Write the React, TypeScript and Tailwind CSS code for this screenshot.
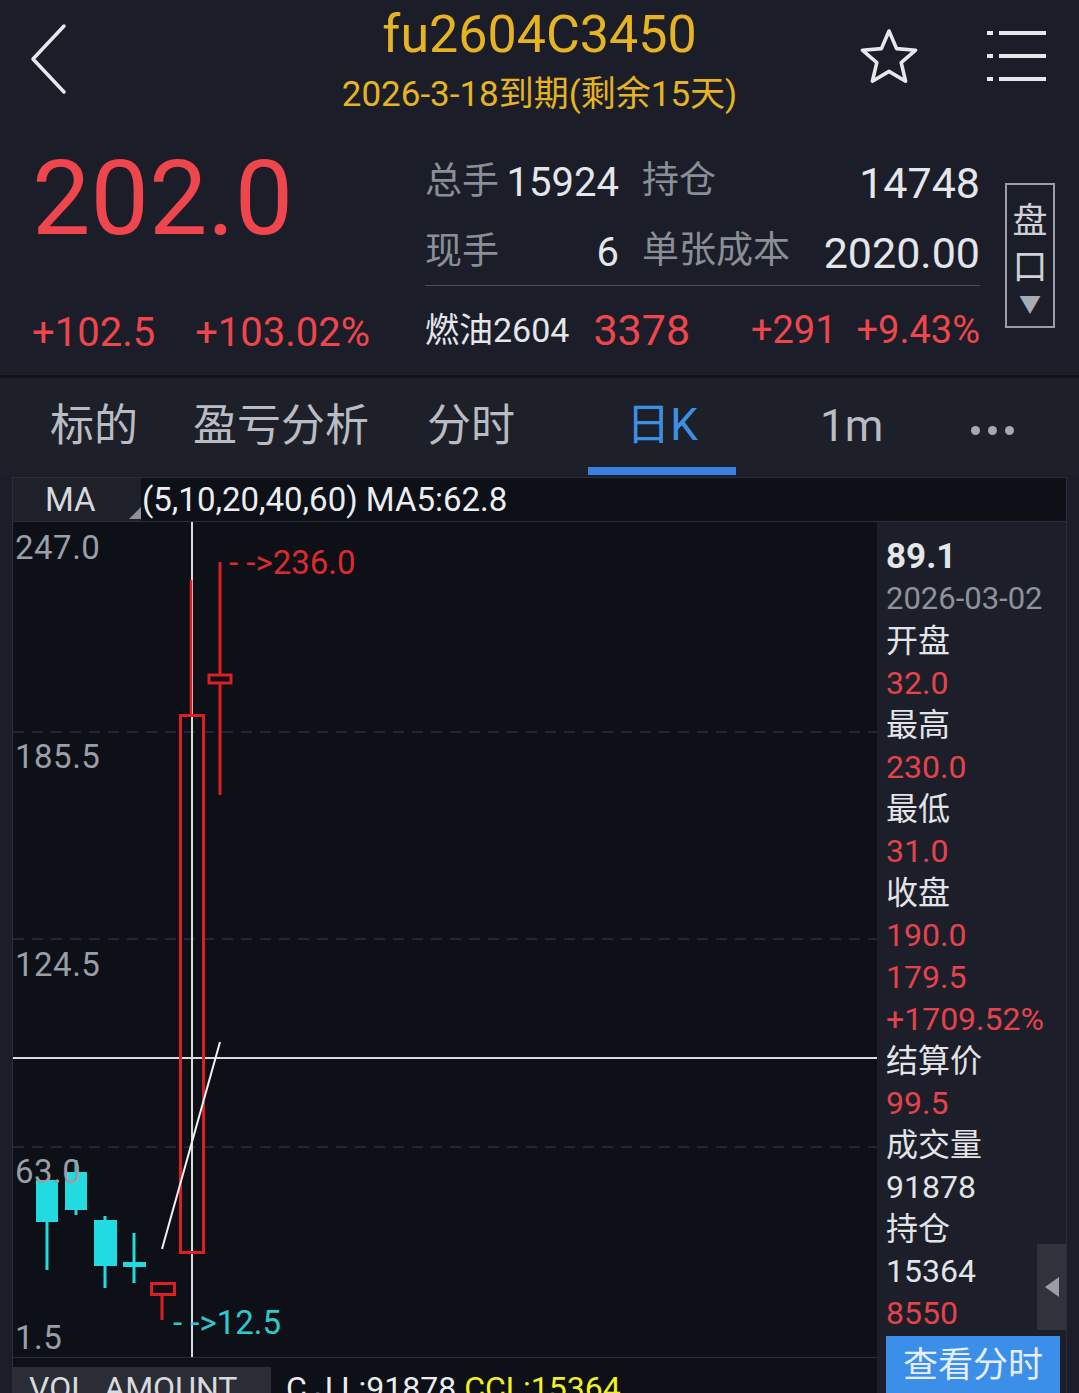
import React from "react";

const RED = "#ef464e";

function BackIcon() {
  return (
    <svg width="40" height="72" viewBox="0 0 40 72" fill="none">
      <path d="M35 3 L4 36 L35 69" stroke="#e8e9ec" strokeWidth="3.5" strokeLinecap="round" strokeLinejoin="round" />
    </svg>
  );
}

function StarIcon() {
  return (
    <svg width="64" height="60" viewBox="0 0 64 60" fill="none">
      <path
        d="M32 4 L39.6 21.6 L58.6 23.2 L44.2 35.6 L48.6 54.2 L32 44.4 L15.4 54.2 L19.8 35.6 L5.4 23.2 L24.4 21.6 Z"
        stroke="#e6e7ea"
        strokeWidth="3.6"
        strokeLinejoin="round"
      />
    </svg>
  );
}

function MenuIcon() {
  return (
    <svg width="60" height="54" viewBox="0 0 60 54" fill="none">
      {[3, 26, 49].map((y) => (
        <g key={y}>
          <rect x="0" y={y - 2} width="6" height="4" fill="#e6e7ea" />
          <rect x="12" y={y - 2} width="47" height="4" fill="#e6e7ea" />
        </g>
      ))}
    </svg>
  );
}

function Chart() {
  const cyan = "#21dbe0";
  const red = "#dc1f24";
  return (
    <div className="relative h-[836px] w-[864px] overflow-hidden border-b border-[#2b2e38] bg-[#0d1017]">
      <svg width="864" height="836" className="absolute inset-0">
        {[210, 417, 625].map((y) => (
          <line key={y} x1="0" x2="864" y1={y} y2={y} stroke="#2a2e38" strokeWidth="1.5" strokeDasharray="11 8" />
        ))}
        {/* crosshair */}
        <line x1="179" x2="179" y1="0" y2="836" stroke="#d9dbdf" strokeWidth="2" />
        <line x1="0" x2="864" y1="536" y2="536" stroke="#d9dbdf" strokeWidth="2" />
        {/* big red candle */}
        <line x1="178" x2="178" y1="58" y2="193" stroke={red} strokeWidth="2.5" />
        <rect x="167.5" y="193.5" width="23" height="537" fill="none" stroke={red} strokeWidth="3" />
        {/* second red candle */}
        <line x1="207" x2="207" y1="40" y2="273" stroke={red} strokeWidth="3" />
        <rect x="196" y="153" width="22" height="8" fill="#0d1017" stroke={red} strokeWidth="3" />
        {/* cyan candles */}
        <line x1="34" x2="34" y1="690" y2="748" stroke={cyan} strokeWidth="3" />
        <rect x="23" y="658" width="22" height="42" fill={cyan} />
        <line x1="63" x2="63" y1="638" y2="693" stroke={cyan} strokeWidth="3" />
        <rect x="52" y="650" width="22" height="38" fill={cyan} />
        <line x1="92" x2="92" y1="694" y2="766" stroke={cyan} strokeWidth="3" />
        <rect x="81" y="698" width="23" height="46" fill={cyan} />
        <line x1="121" x2="121" y1="711" y2="761" stroke={cyan} strokeWidth="3" />
        <rect x="110" y="740" width="23" height="5" fill={cyan} />
        {/* small red candle */}
        <line x1="149" x2="149" y1="773" y2="798" stroke={red} strokeWidth="3" />
        <rect x="138.5" y="761.5" width="23" height="11" fill="none" stroke={red} strokeWidth="3" />
        {/* MA5 */}
        <line x1="149" y1="727" x2="207" y2="520" stroke="#f2f2f2" strokeWidth="2" />
      </svg>

      {[
        ["247.0", 10],
        ["185.5", 219],
        ["124.5", 427],
        ["63.0", 634],
        ["1.5", 800],
      ].map(([v, t]) => (
        <span
          key={v as string}
          className="absolute left-[2px] text-[33px] leading-[32px] tracking-[0.5px] text-[#9a9ea6]"
          style={{ top: t as number }}
        >
          {v}
        </span>
      ))}
      <span className="absolute left-[216px] top-[25px] text-[33px] leading-[32px] text-[#dd2a2d]">- -&gt;236.0</span>
      <span className="absolute left-[160px] top-[785px] text-[33px] leading-[32px] text-[#2cc9cf]">- -&gt;12.5</span>
    </div>
  );
}

function SidePanel() {
  const rows: [string, string][] = [
    ["开盘", "w"],
    ["32.0", "r"],
    ["最高", "w"],
    ["230.0", "r"],
    ["最低", "w"],
    ["31.0", "r"],
    ["收盘", "w"],
    ["190.0", "r"],
    ["179.5", "r"],
    ["+1709.52%", "r"],
    ["结算价", "w"],
    ["99.5", "r"],
    ["成交量", "w"],
    ["91878", "w"],
    ["持仓", "w"],
    ["15364", "w"],
    ["8550", "r"],
  ];
  return (
    <div className="relative flex w-[191px] flex-col bg-[#1c1f29] pt-[14px]">
      <div className="flex h-[42px] items-center px-[9px] text-[35px] font-bold text-[#e4e6ea]">89.1</div>
      <div className="flex h-[42px] items-center px-[9px] text-[31px] text-[#8e929a]">2026-03-02</div>
      {rows.map(([t, c], i) => (
        <div
          key={i}
          className={
            "flex h-[42px] items-center px-[9px] text-[32px] " +
            (c === "r" ? "text-[#e5434b]" : "text-[#e2e4e8]")
          }
        >
          {t}
        </div>
      ))}
      <div className="absolute right-0 top-[722px] flex h-[86px] w-[29px] items-center justify-center bg-[#30333c]">
        <div className="h-0 w-0 border-y-[10px] border-r-[14px] border-y-transparent border-r-[#9a9da5]" />
      </div>
      <div className="ml-[9px] mt-[2px] flex h-[60px] w-[174px] items-center justify-center bg-[#3b8fe8] text-[35px] text-[#e6eef9]">
        查看分时
      </div>
    </div>
  );
}

export default function App() {
  return (
    <div className="h-[1393px] w-[1079px] overflow-hidden bg-[#1b1e28] font-[Roboto,'Noto_Sans_CJK_SC',sans-serif]">
      {/* Header */}
      <div className="grid h-[130px] grid-cols-[240px_1fr_240px] items-start">
        <div className="pl-[29px] pt-[23px]">
          <BackIcon />
        </div>
        <div className="flex flex-col items-center pt-[5px] text-[#e6b322]">
          <div className="text-[52px] leading-[60px]">fu2604C3450</div>
          <div className="mt-[10px] text-[35px] leading-[40px]">2026-3-18到期(剩余15天)</div>
        </div>
        <div className="flex items-start pl-[18px] pt-[27px]">
          <StarIcon />
          <div className="ml-[66px] pt-[3px]">
            <MenuIcon />
          </div>
        </div>
      </div>

      {/* Quote stats */}
      <div className="flex h-[245px]">
        <div className="w-[425px] pl-[32px]">
          <div className="flex h-[138px] items-center text-[104px] leading-none" style={{ color: RED }}>
            202.0
          </div>
          <div className="mt-[35px] flex h-[60px] items-center text-[40px] leading-none" style={{ color: RED }}>
            <span>+102.5</span>
            <span className="ml-[40px]">+103.02%</span>
          </div>
        </div>
        <div className="w-[555px] pt-[28px]">
          <div className="flex h-[50px] items-center text-[40px] leading-none">
            <div className="flex w-[194px] justify-between">
              <span className="text-[37px] text-[#8a8e96]">总手</span>
              <span className="text-[#e4e6ea]">15924</span>
            </div>
            <div className="ml-[23px] flex flex-1 justify-between">
              <span className="text-[37px] text-[#8a8e96]">持仓</span>
              <span className="text-[43px] text-[#e4e6ea]">14748</span>
            </div>
          </div>
          <div className="mt-[20px] flex h-[50px] items-center text-[40px] leading-none">
            <div className="flex w-[194px] justify-between">
              <span className="text-[37px] text-[#8a8e96]">现手</span>
              <span className="text-[#e4e6ea]">6</span>
            </div>
            <div className="ml-[23px] flex flex-1 justify-between">
              <span className="text-[37px] text-[#8a8e96]">单张成本</span>
              <span className="text-[43px] text-[#e4e6ea]">2020.00</span>
            </div>
          </div>
          <div className="mt-[7px] h-px bg-[#4a4d56]" />
          <div className="mt-[19px] flex h-[50px] items-center leading-none">
            <span className="text-[34px] text-[#e4e6ea]">燃油2604</span>
            <span className="ml-[24px] text-[43px]" style={{ color: RED }}>3378</span>
            <span className="ml-auto text-[38px]" style={{ color: RED }}>+291</span>
            <span className="ml-[20px] text-[38px]" style={{ color: RED }}>+9.43%</span>
          </div>
        </div>
        <div className="ml-[25px] mt-[53px] flex h-[145px] w-[50px] flex-col items-center border-2 border-[#9a9da5] pt-[14px] text-[35px] leading-[46px] text-[#cfd1d6]">
          <span>盘</span>
          <span>口</span>
          <span className="text-[22px] leading-[28px] text-[#a8abb2]">▼</span>
        </div>
      </div>

      <div className="h-[3px] bg-[#111319]" />

      {/* Tabs */}
      <div className="flex h-[97px] items-stretch bg-[#1d2029] text-[44px] leading-none text-[#b9bcc3]">
        <div className="ml-[50px] flex items-center pb-[2px]">标的</div>
        <div className="ml-[55px] flex items-center pb-[2px]">盈亏分析</div>
        <div className="ml-[58px] flex items-center pb-[2px]">分时</div>
        <div className="ml-[73px] flex w-[148px] flex-col">
          <div className="flex flex-1 items-center justify-center pt-[5px] text-[#3d8fe6]">日K</div>
          <div className="h-[8px] bg-[#3b7fe0]" />
        </div>
        <div className="ml-[84px] flex items-center pb-[2px]">1m</div>
        <div className="ml-[88px] flex items-center gap-[8px] pt-[8px]">
          <span className="h-[9px] w-[9px] rounded-full bg-[#a6a9b0]" />
          <span className="h-[9px] w-[9px] rounded-full bg-[#a6a9b0]" />
          <span className="h-[9px] w-[9px] rounded-full bg-[#a6a9b0]" />
        </div>
      </div>

      {/* Chart block */}
      <div className="mx-[12px] mt-[2px] border-l border-r border-t border-[#2b2e38]">
        <div className="flex h-[44px] items-stretch border-b border-[#2b2e38] bg-[#0d1017] text-[33px] leading-none">
          <div className="relative flex w-[128px] items-center bg-[#1e2129] pl-[32px] text-[#d6d8dc]">
            MA
            <div className="absolute bottom-[2px] right-0 h-0 w-0 border-b-[12px] border-l-[12px] border-b-[#8d9098] border-l-transparent" />
          </div>
          <div className="flex items-center pl-[1px] text-[#eceef1]">(5,10,20,40,60) MA5:62.8</div>
        </div>
        <div className="flex">
          <div className="flex w-[864px] flex-col">
            <Chart />
            <div className="flex h-[35px] overflow-hidden bg-[#0d1017]">
              <div className="mt-[9px] w-[258px] bg-[#2a2d36] pl-[16px] pt-[5px] text-[32px] leading-[32px] text-[#d8dade]">
                VOL&nbsp;&nbsp;AMOUNT
              </div>
              <div className="ml-[15px] pt-[14px] text-[32px] leading-[32px]">
                <span className="text-[#eceef1]">C.J.L:91878 </span>
                <span className="text-[#f2f21f]">CCL:15364</span>
              </div>
            </div>
          </div>
          <SidePanel />
        </div>
      </div>
    </div>
  );
}
